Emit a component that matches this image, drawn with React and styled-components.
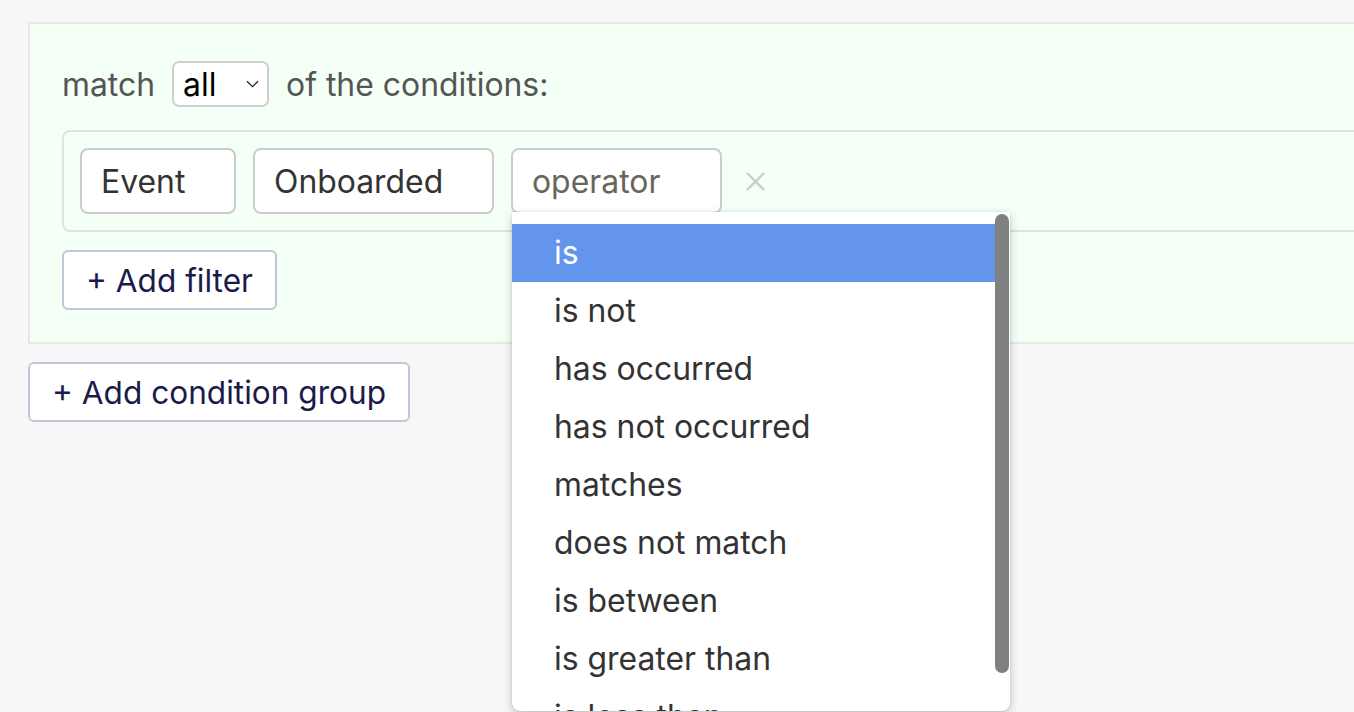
import React, { useState } from "react";
import styled, { createGlobalStyle } from "styled-components";

const GlobalStyle = createGlobalStyle`
  html, body {
    margin: 0;
    padding: 0;
    background: #f7f7f7;
    overflow: hidden;
  }
  body {
    font-family: Inter, "Noto Sans", "Liberation Sans", sans-serif;
  }
  * {
    box-sizing: border-box;
  }
`;

const Page = styled.div`
  padding: 22px 0 0 28px;
  height: 712px;
  font-size: 31.9px;
`;

const Group = styled.div`
  margin-right: -120px;
  background: #f4fff5;
  border: 2px solid #e6e8e6;
  padding: 37px 0 32px 32px;
`;

const Header = styled.div`
  display: flex;
  align-items: center;
  gap: 17px;
  height: 46px;
  color: #555;
`;

const MatchSelect = styled.div`
  display: flex;
  align-items: center;
  justify-content: space-between;
  width: 97px;
  height: 46px;
  padding: 0 8px 0 9px;
  background: #fff;
  border: 2px solid #cfcfcf;
  border-radius: 7px;
  color: #000;
`;

const RuleRow = styled.div`
  display: flex;
  align-items: center;
  gap: 17px;
  margin-top: 23px;
  padding: 16px;
  border: 2px solid #dde3dd;
  border-radius: 8px;
`;

const FieldWrap = styled.div`
  position: relative;
`;

const Field = styled.div`
  display: flex;
  align-items: center;
  width: ${(p) => p.width}px;
  height: 66px;
  padding: 0 19px;
  background: #fff;
  border: 2px solid #cccccc;
  border-radius: 8px;
  color: ${(p) => (p.placeholder ? "#66665a" : "#333")};
`;

const RemoveButton = styled.button`
  display: flex;
  align-items: center;
  margin-left: 7px;
  padding: 0;
  border: none;
  background: none;
  cursor: pointer;
`;

const Menu = styled.div`
  position: absolute;
  top: 64px;
  left: 1px;
  width: 498px;
  height: 499px;
  background: #fff;
  border-radius: 0 0 8px 8px;
  box-shadow: 0 3px 10px rgba(0, 0, 0, 0.22), 0 0 1px rgba(0, 0, 0, 0.3);
  overflow: hidden;
  z-index: 10;
`;

const OptionList = styled.ul`
  margin: 0;
  padding: 12px 15px 11px 0;
  list-style: none;
`;

const ScrollThumb = styled.div`
  position: absolute;
  top: 2px;
  right: 1px;
  width: 14px;
  height: 459px;
  border-radius: 7px;
  background: #808080;
`;

const MenuItem = styled.li`
  height: 58px;
  line-height: 58px;
  padding-left: 42px;
  color: ${(p) => (p.active ? "#fff" : "#333")};
  background: ${(p) => (p.active ? "#6495ed" : "transparent")};
  white-space: nowrap;
`;

const AddButton = styled.button`
  display: flex;
  align-items: center;
  height: 60px;
  margin-top: 18px;
  padding: 0 22px;
  background: #fff;
  border: 2px solid #c4c4dc;
  border-radius: 6px;
  font-family: inherit;
  font-size: 31.6px;
  color: #1b1b4b;
  cursor: pointer;
`;

const operators = [
  "is",
  "is not",
  "has occurred",
  "has not occurred",
  "matches",
  "does not match",
  "is between",
  "is greater than",
  "is less than",
];

const Chevron = () => (
  <svg width="13" height="8" viewBox="0 0 13 8">
    <path d="M1 1.2 L6.5 6.6 L12 1.2" fill="none" stroke="#222" strokeWidth="1.3" />
  </svg>
);

const Cross = () => (
  <svg width="19" height="19" viewBox="0 0 19 19">
    <path d="M1 1 L18 18 M18 1 L1 18" stroke="#cccccc" strokeWidth="2.4" />
  </svg>
);

const App = () => {
  const [selected, setSelected] = useState("is");

  return (
    <Page>
      <GlobalStyle />
      <Group>
        <Header>
          <span>match</span>
          <MatchSelect>
            <span>all</span>
            <Chevron />
          </MatchSelect>
          <span>of the conditions:</span>
        </Header>
        <RuleRow>
          <Field width={156}>Event</Field>
          <Field width={241}>Onboarded</Field>
          <FieldWrap>
            <Field width={211} placeholder>
              operator
            </Field>
            <Menu>
              <OptionList>
                {operators.map((op) => (
                  <MenuItem
                    key={op}
                    active={selected === op}
                    onMouseEnter={() => setSelected(op)}
                  >
                    {op}
                  </MenuItem>
                ))}
              </OptionList>
              <ScrollThumb />
            </Menu>
          </FieldWrap>
          <RemoveButton>
            <Cross />
          </RemoveButton>
        </RuleRow>
        <AddButton>+ Add filter</AddButton>
      </Group>
      <AddButton>+ Add condition group</AddButton>
    </Page>
  );
};

export default App;
